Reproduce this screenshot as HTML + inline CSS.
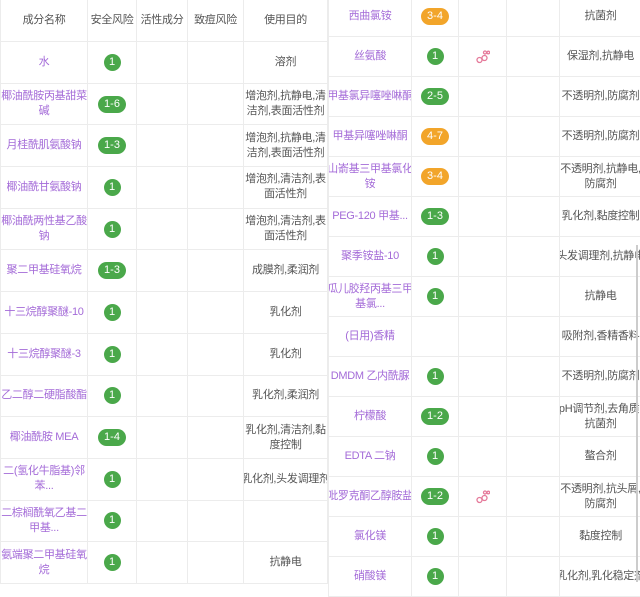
<!DOCTYPE html>
<html><head><meta charset="utf-8"><style>
*{margin:0;padding:0;box-sizing:border-box}
body{width:640px;height:582px;overflow:hidden;background:#fff;font-family:"Liberation Sans","Noto Sans CJK SC",sans-serif;font-size:11px;color:#555;position:relative}
.p{position:absolute;top:0}
.r{display:flex;border-bottom:1px solid #ececec}
.c{border-right:1px solid #ececec;display:flex;align-items:center;justify-content:center;text-align:center;line-height:15px;padding:0;flex:none;overflow:hidden;letter-spacing:-0.3px;white-space:nowrap}
.n{color:#a46bd8}
.b{display:inline-block;height:17px;line-height:17px;border-radius:9px;color:#fff;font-size:11px;min-width:17px;padding:0 3px;background:#4aa84a;letter-spacing:0}
.w{min-width:28px}
.o{background:#f2a52a}
</style></head><body>
<div class="p" style="left:0;width:328px;border-left:1px solid #ececec">
<div class="r" style="height:42px"><div class="c" style="width:87px">成分名称</div><div class="c" style="width:49px">安全风险</div><div class="c" style="width:51px">活性成分</div><div class="c" style="width:56px">致痘风险</div><div class="c" style="width:84px">使用目的</div></div>
</div>
<div class="p" id="L" style="left:0;top:42px;width:328px;border-left:1px solid #ececec"></div>
<div class="p" id="R" style="left:328px;top:-3px;width:312px;border-left:1px solid #ececec"></div>
<div style="position:absolute;left:636px;top:245px;width:2px;height:337px;background:#ccc"></div>
<script>
var mol='<svg width="14" height="14" viewBox="0 0 14 14"><g fill="none" stroke="#e57a9a" stroke-width="1.3"><circle cx="3.5" cy="10" r="2.5"/><circle cx="8.5" cy="8" r="2.5"/><circle cx="9" cy="2.5" r="1.5"/><circle cx="12.3" cy="2.5" r="1.3"/></g></svg>';
function badge(s){if(!s)return'';var o=s[0]>'2'?' o':'';return '<span class="b'+(s.length>1?' w':'')+o+'">'+s+'</span>'}
function build(id,h,w,rows){var out='';rows.forEach(function(r){out+='<div class="r" style="height:'+h+'px"><div class="c n" style="width:'+w[0]+'px">'+r[0]+'</div><div class="c" style="width:'+w[1]+'px">'+badge(r[1])+'</div><div class="c" style="width:'+w[2]+'px">'+(r[2]?mol:'')+'</div><div class="c" style="width:'+w[3]+'px"></div><div class="c" style="width:'+w[4]+'px;'+(id=='R'?'border-right:none;':'')+'">'+r[3]+'</div></div>'});document.getElementById(id).innerHTML=out}
build('L',41.7,[87,49,51,56,84],[
['水','1',0,'溶剂'],['椰油酰胺丙基甜菜<br>碱','1-6',0,'增泡剂,抗静电,清<br>洁剂,表面活性剂'],['月桂酰肌氨酸钠','1-3',0,'增泡剂,抗静电,清<br>洁剂,表面活性剂'],['椰油酰甘氨酸钠','1',0,'增泡剂,清洁剂,表<br>面活性剂'],['椰油酰两性基乙酸<br>钠','1',0,'增泡剂,清洁剂,表<br>面活性剂'],['聚二甲基硅氧烷','1-3',0,'成膜剂,柔润剂'],['十三烷醇聚醚-10','1',0,'乳化剂'],['十三烷醇聚醚-3','1',0,'乳化剂'],['乙二醇二硬脂酸酯','1',0,'乳化剂,柔润剂'],['椰油酰胺 MEA','1-4',0,'乳化剂,清洁剂,黏<br>度控制'],['二(氢化牛脂基)邻<br>苯...','1',0,'乳化剂,头发调理剂'],['二棕榈酰氧乙基二<br>甲基...','1',0,''],['氨端聚二甲基硅氧<br>烷','1',0,'抗静电']]);
build('R',40,[83,47,48,53,81],[
['西曲氯铵','3-4',0,'抗菌剂'],['丝氨酸','1',1,'保湿剂,抗静电'],['甲基氯异噻唑啉酮','2-5',0,'不透明剂,防腐剂'],['甲基异噻唑啉酮','4-7',0,'不透明剂,防腐剂'],['山嵛基三甲基氯化<br>铵','3-4',0,'不透明剂,抗静电,<br>防腐剂'],['PEG-120 甲基...','1-3',0,'乳化剂,黏度控制'],['聚季铵盐-10','1',0,'头发调理剂,抗静电'],['瓜儿胶羟丙基三甲<br>基氯...','1',0,'抗静电'],['(日用)香精','',0,'吸附剂,香精香料'],['DMDM 乙内酰脲','1',0,'不透明剂,防腐剂'],['柠檬酸','1-2',0,'pH调节剂,去角质,<br>抗菌剂'],['EDTA 二钠','1',0,'螯合剂'],['吡罗克酮乙醇胺盐','1-2',1,'不透明剂,抗头屑,<br>防腐剂'],['氯化镁','1',0,'黏度控制'],['硝酸镁','1',0,'乳化剂,乳化稳定剂']]);
</script>
</body></html>
